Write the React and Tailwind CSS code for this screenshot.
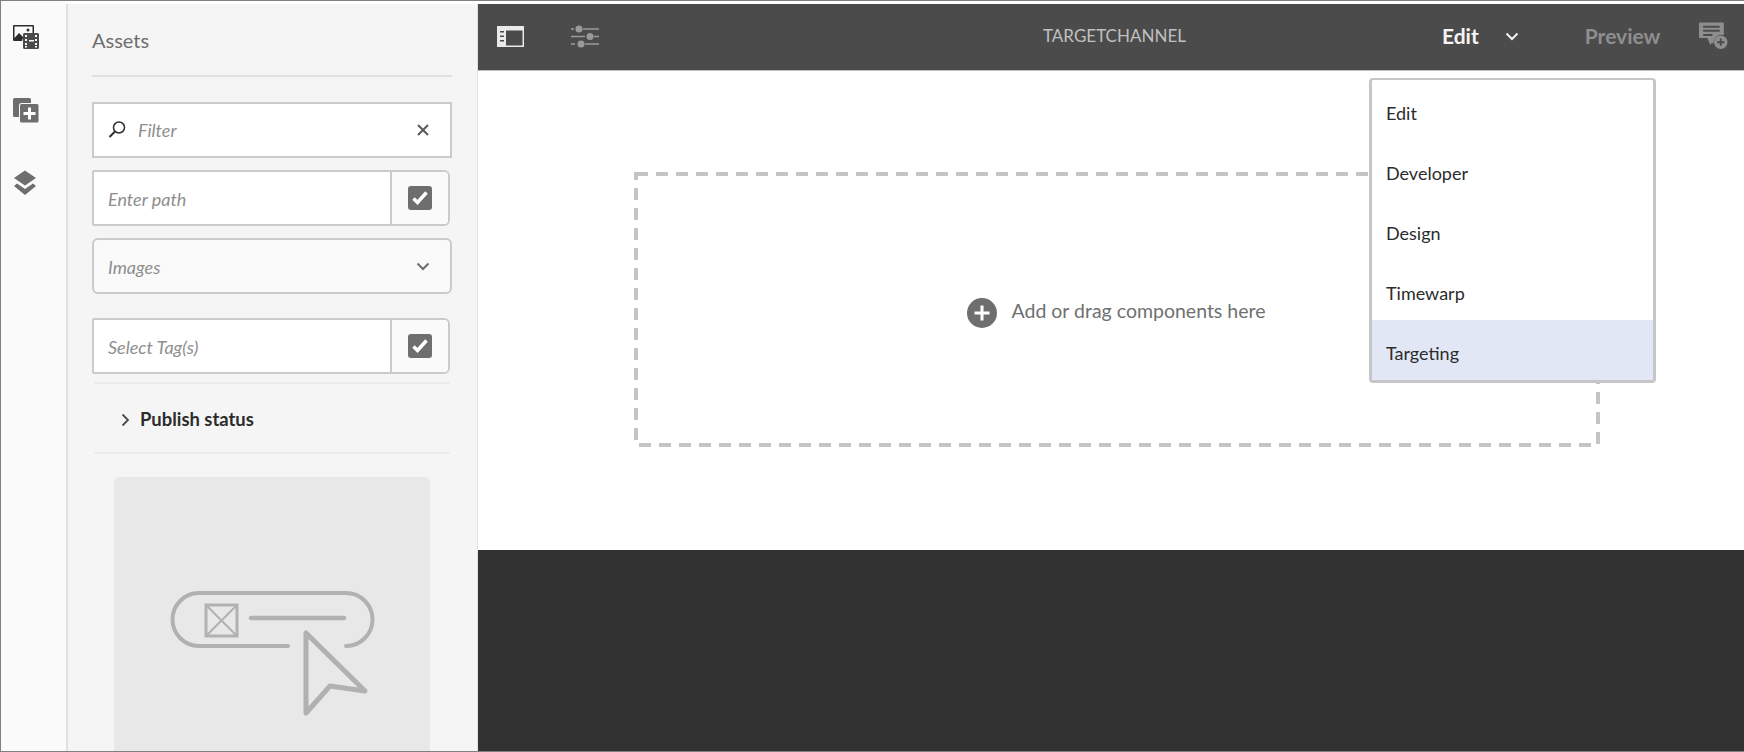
const FONT = "font-['Lato','Noto_Sans',sans-serif]";

function AssetsIcon() {
  return (
    <svg width="28" height="26" viewBox="0 0 28 26">
      <path d="M1 0h19a1 1 0 0 1 1 1v7h-1.500V1.500h-18V13L6 8l4 4v1l-1 3H1a1 1 0 0 1-1-1V1a1 1 0 0 1 1-1z" fill="#2c2c2c" />
      <circle cx="15" cy="5" r="1.500" fill="#2c2c2c" />
      <path fillRule="evenodd" d="M11.500 8h13a1.500 1.500 0 0 1 1.500 1.500v13a1.500 1.500 0 0 1-1.500 1.500h-13a1.500 1.500 0 0 1-1.500-1.500v-13A1.500 1.500 0 0 1 11.500 8zM12 10v2h2v-2zm0 4v2h2v-2zm0 4v2h2v-2zm0 3v1.500h2V21zM22 10v2h2v-2zm0 4v2h2v-2zm0 4v2h2v-2zm0 3v1.500h2V21zM16 15v1.500h5V15z" fill="#4b4b4b" />
    </svg>
  );
}

function AddIcon() {
  return (
    <svg width="26" height="25" viewBox="0 0 26 25">
      <path d="M1.500 0h15A1.500 1.500 0 0 1 18 1.500V5H8.500A2.500 2.500 0 0 0 6 7.500V19H1.500A1.500 1.500 0 0 1 0 17.500v-16A1.500 1.500 0 0 1 1.500 0z" fill="#6e6e6e" />
      <rect x="7" y="6" width="18.500" height="18.500" rx="1.500" fill="#6e6e6e" />
      <path d="M15 9.500h3V14h4.500v3H18v4.500h-3V17h-4.500v-3H15z" fill="#fff" />
    </svg>
  );
}

function LayersIcon() {
  return (
    <svg width="24" height="26" viewBox="0 0 24 26">
      <path d="M12 0.500l11 7.500-11 7.500L1 8z" fill="#6e6e6e" />
      <path d="M4 13.500l8 5.500 8-5.500 3 2.500-11 9L1 16z" fill="#6e6e6e" />
    </svg>
  );
}

function CheckBox() {
  return (
    <div className="flex h-6 w-6 items-center justify-center rounded-[3px] bg-[#6e6e6e]">
      <svg width="18" height="16" viewBox="0 0 18 16">
        <path d="M2.500 8.500l4 4 9-10" fill="none" stroke="#fff" strokeWidth="3.500" />
      </svg>
    </div>
  );
}

function Chevron({ color, width = 2 }) {
  return (
    <svg width="14" height="9" viewBox="0 0 14 9">
      <path d="M1.500 1.500L7 7l5.500-5.500" fill="none" stroke={color} strokeWidth={width} />
    </svg>
  );
}

function InputWithCheck({ placeholder, className }) {
  return (
    <div className={`flex h-[56px] w-[358px] overflow-hidden rounded-r-[6px] rounded-l-[2px] border-2 border-[#cbcbcb] ${className}`}>
      <div className="flex flex-1 items-center bg-white pl-[14px] pt-[2px] text-[18px] italic text-[#8e8e8e]">{placeholder}</div>
      <div className="flex w-[58px] items-center justify-center border-l-2 border-[#cbcbcb] bg-[#fafafa]">
        <CheckBox />
      </div>
    </div>
  );
}

function Illustration() {
  return (
    <svg width="210" height="130" viewBox="168 588 210 130" fill="none" stroke="#b1b1b1" strokeLinecap="round" strokeLinejoin="round">
      <path d="M288 646H199a26.500 26.500 0 0 1 0-53H346a26.500 26.500 0 0 1 0 53" strokeWidth="4" />
      <rect x="206" y="605" width="31" height="31" strokeWidth="3" strokeLinecap="butt" strokeLinejoin="miter" />
      <path d="M206 605l31 31M237 605l-31 31" strokeWidth="2" />
      <path d="M251 618h93" strokeWidth="4.500" />
      <path d="M306 633v80l24-27 35 5z" strokeWidth="5" />
    </svg>
  );
}

function Sidebar() {
  return (
    <aside className="flex w-[477px] shrink-0">
      <div className="flex w-[65px] shrink-0 flex-col items-start gap-[47px] bg-[#fafafa] pl-[12px] pt-[24px]">
        <AssetsIcon />
        <AddIcon />
        <LayersIcon />
      </div>
      <div className="mt-[3px] h-full w-[412px] overflow-hidden border-x-2 border-r border-[#e1e1e1] bg-[#f5f5f5] pt-[1px]">
        <div className="ml-[24px] w-[360px]">
          <h2 className="flex h-[72px] items-center border-b-2 border-[#e1e1e1] pb-[1px] text-[20px] text-[#6e6e6e]">Assets</h2>
          <div className="mt-[25px] flex h-[56px] items-center border-2 border-[#cbcbcb] bg-white pl-[14px] pr-[20px] text-[18px] italic text-[#8e8e8e]">
            <svg width="18" height="18" viewBox="0 0 18 18" fill="none" stroke="#2c2c2c">
              <circle cx="11" cy="6.500" r="5.500" strokeWidth="1.500" />
              <path d="M7 10.500L1.500 16" strokeWidth="2" />
            </svg>
            <span className="ml-[12px] flex-1 pt-[1px]">Filter</span>
            <svg width="14" height="14" viewBox="0 0 14 14" stroke="#5a5a5a" strokeWidth="2">
              <path d="M2 2l10 10M12 2L2 12" />
            </svg>
          </div>
          <InputWithCheck placeholder="Enter path" className="mt-[12px]" />
          <div className="mt-[12px] flex h-[56px] items-center justify-between rounded-[6px] border-2 border-[#cbcbcb] bg-[#fafafa] pl-[14px] pr-[20px] text-[18px] italic text-[#8e8e8e]">
            <span className="pt-[2px]">Images</span>
            <Chevron color="#6e6e6e" />
          </div>
          <InputWithCheck placeholder="Select Tag(s)" className="mt-[24px]" />
          <div className="mx-[2px] mt-[8px] flex h-[72px] items-center border-y-2 border-[#ececec] pl-[27px] pt-[4px] text-[18.4px] font-bold text-[#2c2c2c]">
            <svg width="9" height="14" viewBox="0 0 9 14" className="mr-[10px]">
              <path d="M1.500 1.500L7 7l-5.500 5.500" fill="none" stroke="#4b4b4b" strokeWidth="1.800" />
            </svg>
            Publish status
          </div>
          <div className="ml-[22px] mt-[23px] flex h-[400px] w-[316px] justify-center rounded-t-[6px] bg-[#e8e8e8] pl-[2px] pt-[111px]">
            <Illustration />
          </div>
        </div>
      </div>
    </aside>
  );
}

function Toolbar() {
  return (
    <header className="flex h-[67px] shrink-0 items-center border-b border-[#bdbdbd] bg-[#4b4b4b] pb-[2px]">
      <div className="flex w-[565px] items-center gap-[47px] pl-[19px]">
        <svg width="27" height="21" viewBox="0 0 27 21">
          <path fillRule="evenodd" d="M0 0h27v21H0zM9 4.500V19.500H25.500V4.500zM3 5v1.500h4V5zM3 9.500V11h4V9.500zM3 14v1.500h4V14z" fill="#eaeaea" />
        </svg>
        <svg width="28" height="23" viewBox="0 0 28 23" fill="#9a9a9a" stroke="#9a9a9a">
          <path d="M0 4h3M12 4h16M0 11.500h14M23 11.500h5M0 19h4M14 19h14" strokeWidth="1.500" />
          <circle cx="8" cy="4" r="3.500" stroke="none" />
          <circle cx="19" cy="11.500" r="3.500" stroke="none" />
          <circle cx="10" cy="19" r="3.500" stroke="none" />
        </svg>
      </div>
      <div className="w-[375px] text-[17px] text-[#c0c0c0]">TARGETCHANNEL</div>
      <div className="ml-[24px] text-[21px] font-bold text-[#f5f5f5]">Edit</div>
      <div className="ml-[26px]"><Chevron color="#f0f0f0" /></div>
      <div className="ml-[66px] text-[21px] font-bold text-[#8e8e8e]">Preview</div>
      <svg width="29" height="28" viewBox="0 0 28 26" className="ml-[39px]">
        <path fillRule="evenodd" d="M1 0h22a1 1 0 0 1 1 1v11a8 8 0 0 0-10 8h-4v-.500L8 15H1a1 1 0 0 1-1-1V1a1 1 0 0 1 1-1zM4 3v2h16V3zM4 7v2h16V7zM4 11v2h9v-2z" fill="#8e8e8e" />
        <path d="M9 15h5l-3 7z" fill="#8e8e8e" />
        <circle cx="21" cy="19" r="6.500" fill="#8e8e8e" />
        <path d="M21 15.500v7M17.500 19h7" stroke="#4b4b4b" strokeWidth="1.800" />
      </svg>
    </header>
  );
}

function ModeMenu() {
  const items = ["Edit", "Developer", "Design", "Timewarp", "Targeting"];
  return (
    <ul className="absolute left-[891px] top-[7px] w-[287px] overflow-hidden rounded-[4px] border-[3px] border-t-2 border-[#c6c6c6] bg-white text-[18px] text-[#2c2c2c]">
      {items.map((item) => (
        <li key={item} className={`flex h-[60px] items-center pl-[14px] pt-[6px] ${item === "Targeting" ? "bg-[#e1e7f4]" : ""}`}>
          {item}
        </li>
      ))}
    </ul>
  );
}

function DropZone() {
  return (
    <div className="relative ml-[156px] mt-[101px] flex h-[275px] w-[966px] items-center justify-center pb-[1px] pr-[2px] text-[19.500px] text-[#707070]">
      <svg className="absolute inset-0" width="966" height="275" fill="none">
        <rect x="2" y="2" width="962" height="271" stroke="#c4c4c4" strokeWidth="4" strokeDasharray="12 8" />
      </svg>
      <svg width="30" height="30" viewBox="0 0 30 30" className="mt-[8px]">
        <circle cx="15" cy="15" r="15" fill="#6e6e6e" />
        <path d="M15 7.500v15M7.500 15h15" stroke="#fff" strokeWidth="3" />
      </svg>
      <span className="ml-[15px] mt-[3px]">Add or drag components here</span>
    </div>
  );
}

export default function App() {
  return (
    <div className={`flex h-[752px] w-[1744px] overflow-hidden border-y border-l border-[#808080] bg-white ${FONT}`}>
      <Sidebar />
      <main className="flex min-w-0 flex-1 flex-col pt-[3px]">
        <Toolbar />
        <section className="relative h-[479px] shrink-0 overflow-hidden bg-white">
          <DropZone />
          <ModeMenu />
        </section>
        <div className="flex-1 bg-[#323232]" />
      </main>
    </div>
  );
}
